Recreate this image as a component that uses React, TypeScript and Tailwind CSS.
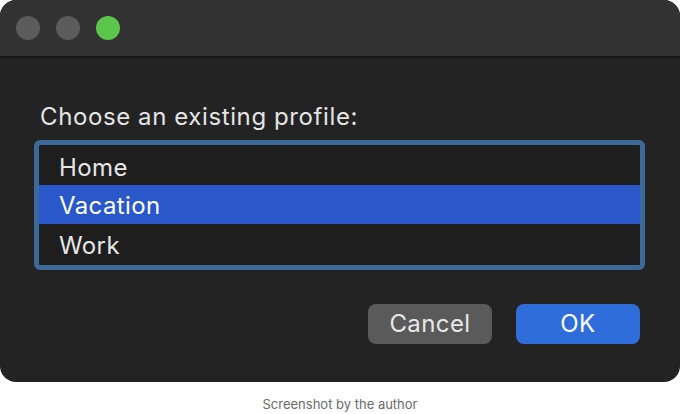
export default function App() {
  const font = { fontFamily: 'Inter, "Liberation Sans", sans-serif' };
  return (
    <div className="w-[680px] h-[414px] bg-white flex flex-col" style={font}>
      <div className="h-[384px] rounded-[16px] overflow-hidden bg-[#232323] flex flex-col">
        <div className="h-[58px] bg-[#323232] border-b-2 border-[#171717] flex items-center gap-4 pl-4">
          <div className="w-6 h-6 rounded-full bg-[#5b5b5b]" />
          <div className="w-6 h-6 rounded-full bg-[#5b5b5b]" />
          <div className="w-6 h-6 rounded-full bg-[#5cc54c]" />
        </div>
        <div className="flex flex-col pl-[34px] pr-[35px]">
          <div className="mt-[44px] pl-[6px] text-[24px] tracking-[0.6px] leading-[30px] text-[#e4e4e4]">Choose an existing profile:</div>
          <div className="mt-[8px] border-[5px] border-[#3c6a98] rounded-[6px] bg-[#1e1e1e] flex flex-col text-[24px] tracking-[0.4px] text-[#e6e6e6]">
            <div className="h-[40px] flex items-center pl-[20px] pt-[5px]">Home</div>
            <div className="h-[39px] flex items-center pl-[20px] pt-[3px] bg-[#2a57ca] text-white">Vacation</div>
            <div className="h-[41px] flex items-center pl-[20px] pt-[2px]">Work</div>
          </div>
          <div className="mt-[34px] flex justify-end gap-6 pr-[5px]">
            <div className="w-[124px] h-[40px] rounded-[8px] bg-[#5a5a5a] text-[#e8e8e8] text-[24px] tracking-[0.4px] flex items-center justify-center">Cancel</div>
            <div className="w-[124px] h-[40px] rounded-[8px] bg-[#2f6ddb] text-white text-[24px] tracking-[0.4px] flex items-center justify-center">OK</div>
          </div>
        </div>
      </div>
      <div className="flex-1 flex items-center justify-center pt-[13px] text-[13px] text-[#6b6b6b]">Screenshot by the author</div>
    </div>
  );
}
